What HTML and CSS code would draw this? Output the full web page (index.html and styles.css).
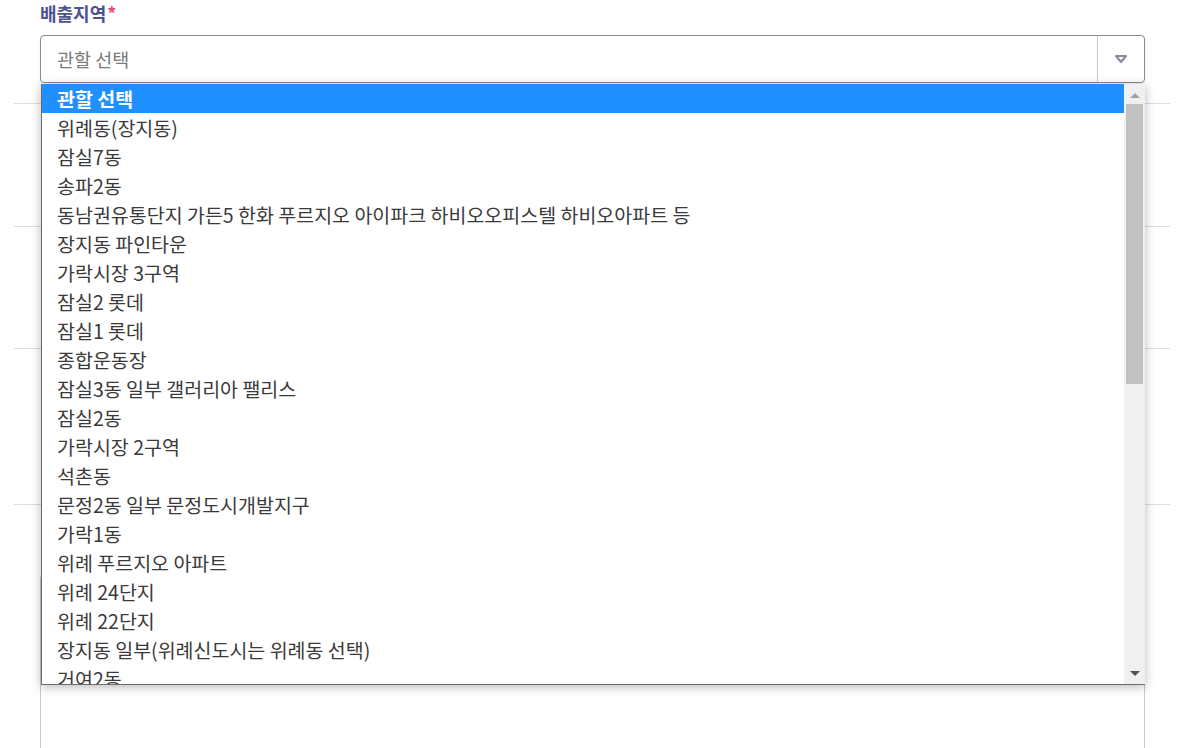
FILE: index.html
```html
<!DOCTYPE html>
<html>
	<head>
		<title>배출지역 선택</title>
		<link rel="stylesheet" href="styles.css">
	</head>

	<body>
		<div class="form">
			<div class="field">
				<div class="label">배출지역<span class="req">*</span></div>
				<div class="select">
					<span class="value">관할 선택</span>
					<span class="arrow">
						<svg width="14" height="10" viewBox="0 0 14 10"><polygon points="2,2 12,2 7,8" fill="none" stroke="#8a8aa0" stroke-width="2.2" stroke-linejoin="round"/></svg>
					</span>
				</div>
			</div>
			<div class="row r1"></div>
			<div class="row r2"></div>
			<div class="row r3"></div>
			<div class="row r4"></div>
			<div class="box"></div>
		</div>

		<!-- open dropdown of the select -->
		<div class="dropdown">
			<div class="options">
				<div class="option selected">관할 선택</div>
				<div class="option">위례동(장지동)</div>
				<div class="option">잠실7동</div>
				<div class="option">송파2동</div>
				<div class="option">동남권유통단지 가든5 한화 푸르지오 아이파크 하비오오피스텔 하비오아파트 등</div>
				<div class="option">장지동 파인타운</div>
				<div class="option">가락시장 3구역</div>
				<div class="option">잠실2 롯데</div>
				<div class="option">잠실1 롯데</div>
				<div class="option">종합운동장</div>
				<div class="option">잠실3동 일부 갤러리아 팰리스</div>
				<div class="option">잠실2동</div>
				<div class="option">가락시장 2구역</div>
				<div class="option">석촌동</div>
				<div class="option">문정2동 일부 문정도시개발지구</div>
				<div class="option">가락1동</div>
				<div class="option">위례 푸르지오 아파트</div>
				<div class="option">위례 24단지</div>
				<div class="option">위례 22단지</div>
				<div class="option">장지동 일부(위례신도시는 위례동 선택)</div>
				<div class="option">거여2동</div>
			</div>
			<div class="scrollbar">
				<div class="up"></div>
				<div class="thumb"></div>
				<div class="track"></div>
				<div class="down"></div>
			</div>
		</div>
	</body>
</html>
```

FILE: styles.css
```css
body {
	margin: 0;
	background: #fff;
	font-family: "Noto Sans CJK KR", "Noto Sans", sans-serif;
	color: #333;
}

.form {
	margin: 0 30px 0 14px;
}

.field {
	padding: 0 25px 0 26px;
}

.label {
	font-size: 18px;
	font-weight: bold;
	color: #4d5290;
	line-height: 26px;
	height: 35px;
}

.req {
	color: #e94a7f;
	margin-left: 1px;
}

.select {
	display: flex;
	height: 46px;
	border: 1px solid #8c8c8c;
	border-radius: 4px;
	background: #fff;
	box-shadow: 0 2px 4px rgba(0, 0, 0, 0.06);
}

.value {
	flex: 1;
	padding-left: 16px;
	line-height: 46px;
	font-size: 18.5px;
	color: #7a7a7a;
}

.arrow {
	width: 46px;
	border-left: 1px solid #c9c9d6;
	display: flex;
	align-items: center;
	justify-content: center;
}

.row {
	border-bottom: 1px solid #dedede;
}

.r1 { height: 20px; }
.r2 { height: 122px; }
.r3 { height: 121px; }
.r4 { height: 155px; }

.box {
	margin: 69px 25px 0 26px;
	height: 200px;
	border: 1px solid #c6c6dc;
	border-radius: 4px;
}

.dropdown {
	position: absolute;
	top: 84px;
	left: 41px;
	width: 1103px;
	height: 600px;
	display: flex;
	background: #fff;
	border-left: 1px solid #6c6c6c;
	border-bottom: 1px solid #6c6c6c;
	box-shadow: 0 2px 10px rgba(0, 0, 0, 0.28);
	overflow: hidden;
}

.options {
	flex: 1;
	overflow: hidden;
}

.option {
	height: 29px;
	line-height: 29px;
	padding-left: 15px;
	font-size: 19.5px;
	color: #3a3a3a;
	white-space: nowrap;
}

.option.selected {
	background: #1e90ff;
	color: #fff;
	font-weight: bold;
}

.scrollbar {
	width: 21px;
	background: #f0f0f0;
	display: flex;
	flex-direction: column;
	align-items: center;
}

.up, .down {
	width: 0;
	height: 0;
	border-left: 5px solid transparent;
	border-right: 5px solid transparent;
}

.up {
	margin: 9px 0 6px;
	border-bottom: 5px solid #a3a3a3;
}

.down {
	margin: 7px 0 8px;
	border-top: 5px solid #505050;
}

.thumb {
	width: 17px;
	height: 280px;
	background: #c1c1c1;
}

.track {
	flex: 1;
}
```
